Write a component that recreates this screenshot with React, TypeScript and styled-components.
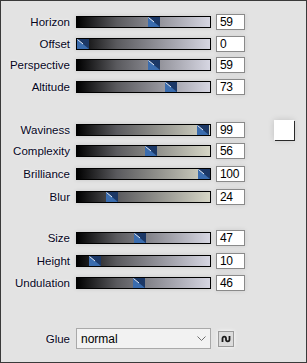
import React from 'react';
import styled, { createGlobalStyle } from 'styled-components';

const GlobalStyle = createGlobalStyle`
  html, body {
    margin: 0;
    padding: 0;
    background: #e3e3e3;
  }
  body {
    font-family: 'Liberation Sans', Arial, sans-serif;
  }
`;

const Panel = styled.div`
  box-sizing: border-box;
  width: 307px;
  height: 363px;
  border: 1px solid #3a3a3a;
  background: #e3e3e3;
  padding-top: 13px;
  display: flex;
  flex-direction: column;
`;

const Group = styled.div<{ $top: number; $gap: number }>`
  display: flex;
  flex-direction: column;
  gap: ${(p) => p.$gap}px;
  margin-top: ${(p) => p.$top}px;
`;

const Row = styled.div`
  display: grid;
  grid-template-columns: 69px 135px 28px auto;
  column-gap: 6px;
  align-items: center;
  height: 16px;
  & > :nth-child(3) {
    margin-left: -1px;
  }
`;

const Label = styled.span`
  justify-self: end;
  font-size: 11.5px;
  color: #06061e;
  text-shadow: 0 0 3px rgba(255, 255, 255, 0.9);
  white-space: nowrap;
`;

const Track = styled.div<{ $tint: string }>`
  position: relative;
  box-sizing: border-box;
  height: 12px;
  border: 1px solid #000;
  background: linear-gradient(to right, #000 0%, #5a5a5e 30%, ${(p) => p.$tint} 100%);
  box-shadow: 0 0 4px rgba(0, 0, 0, 0.12);
`;

const Thumb = styled.svg`
  position: absolute;
  top: 0;
  display: block;
`;

const ValueBox = styled.div`
  box-sizing: border-box;
  height: 16px;
  border: 1px solid #8a8a8a;
  background: #fff;
  font-size: 12px;
  line-height: 14px;
  padding-left: 3px;
  color: #000;
  letter-spacing: -0.3px;
  box-shadow: 0 0 5px rgba(0, 0, 0, 0.1);
`;

const Swatch = styled.div`
  width: 20px;
  height: 20px;
  margin-left: 23px;
  background: #fff;
  box-shadow: 1px 1px 0 #2a2a2a, 0 0 6px rgba(0, 0, 0, 0.15);
`;

const GlueRow = styled.div`
  display: grid;
  grid-template-columns: 69px 135px 16px;
  column-gap: 6px;
  align-items: center;
  margin-top: 37px;
`;

const Select = styled.div`
  box-sizing: border-box;
  height: 21px;
  border: 1px solid #a9a9a9;
  background: #f2f2f2;
  display: flex;
  align-items: center;
  justify-content: space-between;
  padding: 0 4px 0 4px;
  font-size: 12px;
  color: #000;
`;

const LinkButton = styled.div`
  box-sizing: border-box;
  width: 16px;
  height: 16px;
  margin-left: 1px;
  border: 1px solid #9a9a9a;
  background: #dcdcdc;
  display: flex;
  align-items: center;
  justify-content: center;
  box-shadow: 0 0 4px rgba(255, 255, 255, 0.9);
`;

const lavender = '#d6d6e2';
const khaki = '#d6d6c6';

type Param = { name: string; value: number; swatch?: boolean };

const groups: { top: number; gap: number; tint: string; items: Param[] }[] = [
  {
    top: 0,
    gap: 5.7,
    tint: lavender,
    items: [
      { name: 'Horizon', value: 59 },
      { name: 'Offset', value: 0 },
      { name: 'Perspective', value: 59 },
      { name: 'Altitude', value: 73 },
    ],
  },
  {
    top: 25,
    gap: 7,
    tint: khaki,
    items: [
      { name: 'Waviness', value: 99, swatch: true },
      { name: 'Complexity', value: 56 },
      { name: 'Brilliance', value: 100 },
      { name: 'Blur', value: 24 },
    ],
  },
  {
    top: 25,
    gap: 6.5,
    tint: lavender,
    items: [
      { name: 'Size', value: 47 },
      { name: 'Height', value: 10 },
      { name: 'Undulation', value: 46 },
    ],
  },
];

const SliderThumb = ({ value }: { value: number }) => (
  <Thumb
    width="12"
    height="10"
    viewBox="0 0 12 10"
    style={{ left: Math.round((value / 100) * 121) }}
  >
    <rect width="12" height="10" fill="#3a6cae" />
    <polygon points="0,0 12,0 12,10" fill="#1c3866" />
    <line x1="0.5" y1="0.5" x2="6" y2="5" stroke="#e8eef8" strokeWidth="1" />
  </Thumb>
);

export default function App() {
  return (
    <>
      <GlobalStyle />
      <Panel>
        {groups.map((g, gi) => (
          <Group key={gi} $top={g.top} $gap={g.gap}>
            {g.items.map((p) => (
              <Row key={p.name}>
                <Label>{p.name}</Label>
                <Track $tint={g.tint}>
                  <SliderThumb value={p.value} />
                </Track>
                <ValueBox>{p.value}</ValueBox>
                {p.swatch && <Swatch />}
              </Row>
            ))}
          </Group>
        ))}
        <GlueRow>
          <Label>Glue</Label>
          <Select>
            <span>normal</span>
            <svg width="9" height="6" viewBox="0 0 9 6">
              <polyline points="0.5,0.5 4.5,4.5 8.5,0.5" fill="none" stroke="#707070" strokeWidth="1" />
            </svg>
          </Select>
          <LinkButton>
            <svg width="10" height="8" viewBox="0 0 10 8">
              <path
                d="M1.5 7 L1.5 3.5 C1.5 1, 5 1, 5 3.5 L5 4.5 C5 7, 8.5 7, 8.5 4.5 L8.5 1"
                fill="none"
                stroke="#1a1a1a"
                strokeWidth="1.8"
              />
            </svg>
          </LinkButton>
        </GlueRow>
      </Panel>
    </>
  );
}
